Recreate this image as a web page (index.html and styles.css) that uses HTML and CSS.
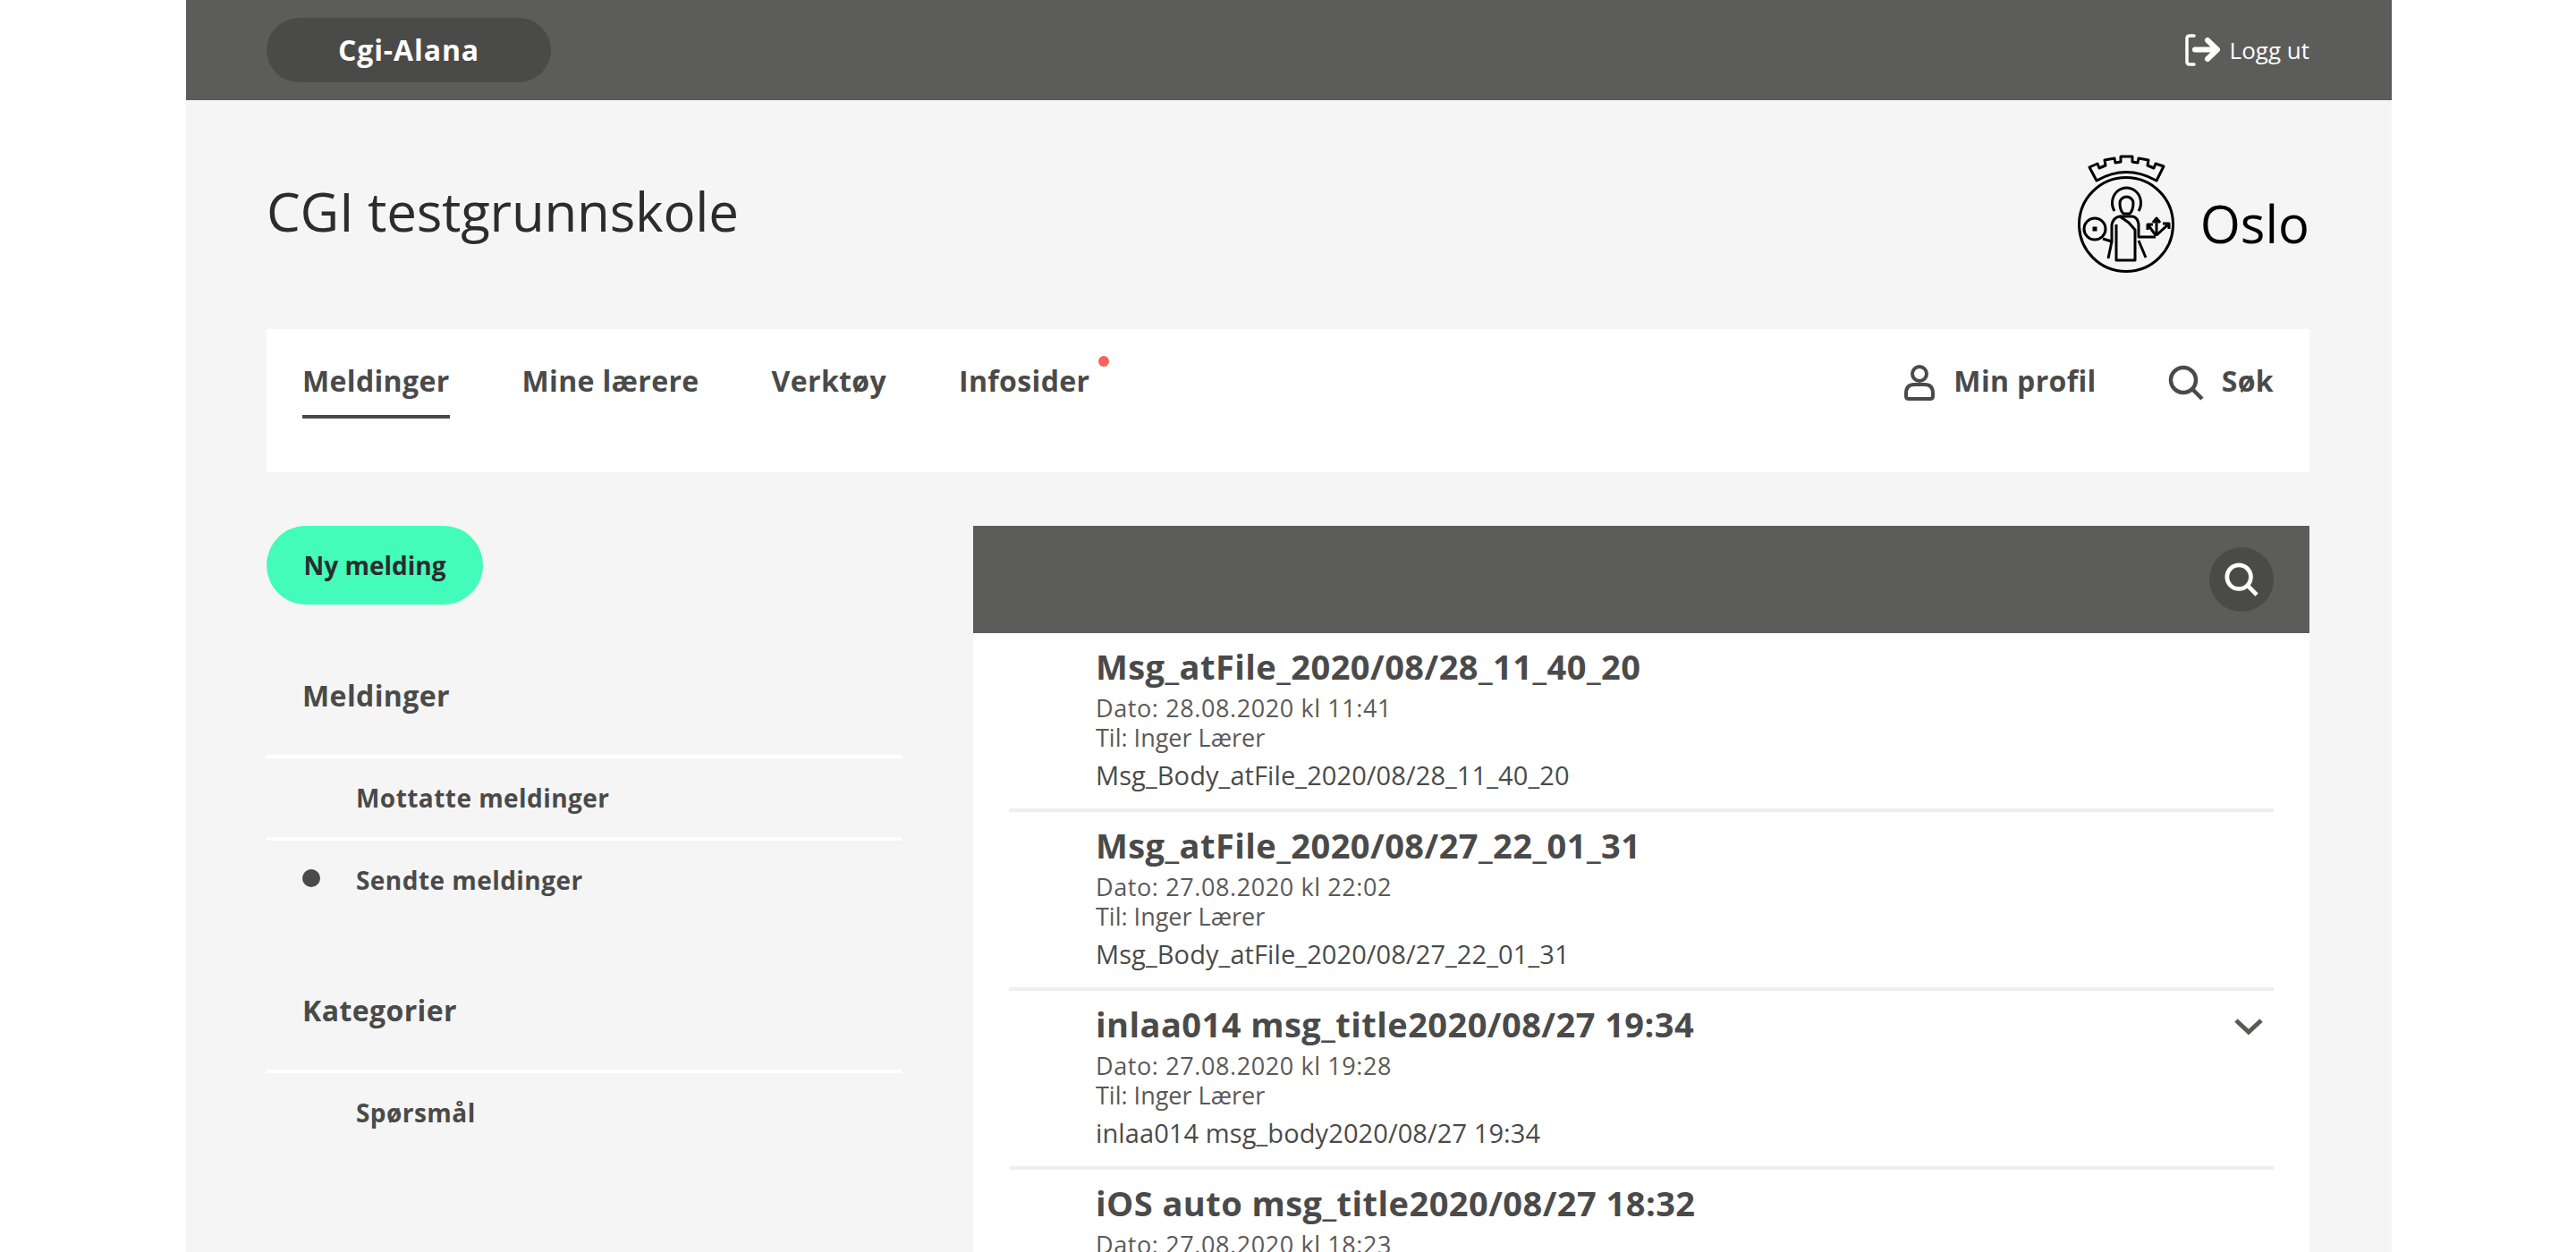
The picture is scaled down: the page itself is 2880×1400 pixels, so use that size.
FILE: index.html
```html
<!DOCTYPE html>
<html lang="no">
<head>
<meta charset="utf-8">
<title>CGI testgrunnskole</title>
<link rel="stylesheet" href="styles.css">
</head>
<body>
<div class="page">
  <header class="topbar">
    <div class="user-pill">Cgi-Alana</div>
    <a class="logout">
      <svg class="logout-icon" viewBox="0 0 40 36" fill="none" stroke="#fff" stroke-linecap="round" stroke-linejoin="round">
        <path d="M10 2H5Q2 2 2 5V31Q2 34 5 34H10" stroke-width="3.500"/>
        <path d="M11 17.500H35M25 7L36 17.500L25 28" stroke-width="6"/>
      </svg>
      <span>Logg ut</span>
    </a>
  </header>

  <div class="brand">
    <h1 class="school">CGI testgrunnskole</h1>
    <div class="logo">
      <svg class="logo-mark" viewBox="0 0 110 134" fill="none" stroke="#000" stroke-width="3" stroke-linejoin="round">
        <path d="M22 29L14 14L23 10L25 15L32 12L31 6L42 4L43 9L49 8V2H62V8L68 9L69 4L80 6L79 12L86 15L88 10L97 13L89 29Q55 10 22 29Z"/>
        <circle cx="55" cy="78" r="52.500"/>
        <path d="M42 63A16 17 0 1 1 69 63"/>
        <path d="M48 54A7.500 7 0 0 1 63 54Q63 62 59 66H52Q48 62 48 54Z"/>
        <circle cx="20" cy="83" r="12"/>
        <rect x="17.500" y="80.500" width="5" height="5" fill="#000" stroke="none"/>
        <path d="M29 94L39 97V78Q41 70 48 69L58 76L65 84V118H44V78"/>
        <path d="M48 69H62Q68 70 69 78V92H88"/>
        <path d="M39 97L35 116M69 96L77 115"/>
        <path d="M89 91V72M85 76L89 71L93 76M88 90L80 79M79 84V78H85M89 90L102 78M96 77H103V83"/>
      </svg>
      <span class="logo-text">Oslo</span>
    </div>
  </div>

  <nav class="mainnav">
    <ul class="nav-left">
      <li class="nav-item active">Meldinger</li>
      <li class="nav-item">Mine lærere</li>
      <li class="nav-item">Verktøy</li>
      <li class="nav-item has-dot">Infosider</li>
    </ul>
    <div class="nav-right">
      <span class="nav-tool">
        <svg class="nav-icon" viewBox="0 0 36 40" fill="none" stroke="#4a4a4a" stroke-width="4">
          <circle cx="18" cy="10" r="8"/>
          <path d="M3 32Q3 22 12 22H24Q33 22 33 32V35Q33 38 30 38H6Q3 38 3 35Z"/>
        </svg>
        Min profil
      </span>
      <span class="nav-tool">
        <svg class="nav-icon search" viewBox="0 0 40 40" fill="none" stroke="#4a4a4a" stroke-width="4.500">
          <circle cx="17" cy="17" r="14"/>
          <path d="M27 27L38 38"/>
        </svg>
        Søk
      </span>
    </div>
  </nav>

  <div class="content">
    <aside class="sidebar">
      <button class="new-message">Ny melding</button>
      <section class="side-group">
        <h2 class="side-title">Meldinger</h2>
        <div class="side-link">Mottatte meldinger</div>
        <div class="side-link current">Sendte meldinger</div>
      </section>
      <section class="side-group">
        <h2 class="side-title">Kategorier</h2>
        <div class="side-link">Spørsmål</div>
      </section>
    </aside>

    <main class="messages">
      <div class="toolbar">
        <span class="search-btn">
          <svg viewBox="0 0 40 40" fill="none" stroke="#fff" stroke-width="5">
            <circle cx="17" cy="17" r="14"/>
            <path d="M27 27L38 38"/>
          </svg>
        </span>
      </div>
      <article class="row">
        <h3 class="row-title">Msg_atFile_2020/08/28_11_40_20</h3>
        <p class="row-date">Dato: 28.08.2020 kl 11:41</p>
        <p class="row-to">Til: Inger Lærer</p>
        <p class="row-body">Msg_Body_atFile_2020/08/28_11_40_20</p>
      </article>
      <article class="row">
        <h3 class="row-title">Msg_atFile_2020/08/27_22_01_31</h3>
        <p class="row-date">Dato: 27.08.2020 kl 22:02</p>
        <p class="row-to">Til: Inger Lærer</p>
        <p class="row-body">Msg_Body_atFile_2020/08/27_22_01_31</p>
      </article>
      <article class="row">
        <h3 class="row-title">inlaa014 msg_title2020/08/27 19:34</h3>
        <svg class="chevron" viewBox="0 0 32 20" fill="none" stroke="#595958" stroke-width="5">
          <path d="M2 3L16 16L30 3"/>
        </svg>
        <p class="row-date">Dato: 27.08.2020 kl 19:28</p>
        <p class="row-to">Til: Inger Lærer</p>
        <p class="row-body">inlaa014 msg_body2020/08/27 19:34</p>
      </article>
      <article class="row">
        <h3 class="row-title">iOS auto msg_title2020/08/27 18:32</h3>
        <p class="row-date">Dato: 27.08.2020 kl 18:23</p>
      </article>
    </main>
  </div>
</div>
</body>
</html>
```
FILE: styles.css
```css
* { box-sizing: border-box; }
html, body { margin: 0; height: 1400px; overflow: hidden; background: #fff; }
body { font-family: "Open Sans", "Noto Sans", sans-serif; color: #4a4a4a; }
h1, h2, h3, p, ul { margin: 0; padding: 0; }
ul { list-style: none; }

.page { width: 2466px; height: 1400px; margin-left: 208px; background: #f5f5f5; overflow: hidden; }

.topbar { height: 112px; background: #5c5c5a; padding: 20px 92px 20px 90px; display: flex; justify-content: space-between; align-items: center; }
.user-pill { width: 318px; height: 72px; padding-bottom: 2px; border-radius: 36px; background: #4a4a49; color: #fff; font-size: 32px; font-weight: 700; display: flex; align-items: center; justify-content: center; letter-spacing: 0.9px; }
.logout { display: flex; align-items: center; gap: 10px; color: #fff; font-size: 26px; }
.logout-icon { width: 40px; height: 36px; }

.brand { height: 256px; padding: 61px 92px 0 90px; display: flex; justify-content: space-between; align-items: flex-start; }
.school { font-size: 60px; font-weight: 500; color: #2c2c2c; line-height: 76px; margin-top: 25px; letter-spacing: -0.2px; }
.logo { display: flex; align-items: center; gap: 28px; }
.logo-mark { width: 110px; height: 134px; }
.logo-text { font-size: 58px; color: #000; margin-top: 18px; }

.mainnav { margin: 0 92px 0 90px; height: 160px; background: #fff; padding: 0 40px; display: flex; justify-content: space-between; }
.nav-left { display: flex; gap: 81px; }
.nav-item { height: 100px; padding-top: 36px; font-size: 32px; line-height: 44px; font-weight: 700; position: relative; letter-spacing: 0.35px; }
.nav-item.active { border-bottom: 4px solid #4a4a4a; padding-top: 36px; }
.nav-item.has-dot::after { content: ""; position: absolute; top: 30px; right: -22px; width: 12px; height: 12px; border-radius: 50%; background: #f8625a; }
.nav-right { display: flex; gap: 80px; padding-top: 36px; }
.nav-tool { display: flex; align-items: flex-start; gap: 20px; font-size: 32px; line-height: 44px; font-weight: 700; letter-spacing: 0.35px; }
.nav-icon { width: 36px; height: 40px; margin-top: 4px; }
.nav-icon.search { width: 40px; }

.content { margin: 60px 92px 0 90px; display: grid; grid-template-columns: 710px 1fr; gap: 80px; }

.new-message { width: 242px; height: 88px; border: 0; border-radius: 44px; background: #43fcbc; color: #2c2c2c; font: 700 28px "Open Sans", sans-serif; display: block; padding: 0; }
.side-group { margin-top: 80px; }
.side-group + .side-group { margin-top: 76px; }
.side-title { font-size: 32px; line-height: 44px; font-weight: 700; padding: 0 40px 44px; border-bottom: 4px solid #fff; letter-spacing: 0.4px; }
.side-link { position: relative; height: 92px; padding: 24px 0 0 100px; font-size: 28px; line-height: 40px; font-weight: 700; border-bottom: 4px solid #fff; letter-spacing: 0.45px; }
.side-link:last-child { border-bottom: 0; }
.side-link.current::before { content: ""; position: absolute; left: 40px; top: 32px; width: 20px; height: 20px; border-radius: 50%; background: #4a4a4a; }

.messages { background: #fff; height: 812px; }
.toolbar { height: 120px; background: #5c5c5a; padding: 24px 40px; display: flex; justify-content: flex-end; }
.search-btn { width: 72px; height: 72px; border-radius: 50%; background: #4a4a49; display: flex; align-items: center; justify-content: center; }
.search-btn svg { width: 38px; height: 38px; }

.row { position: relative; height: 200px; margin: 0 40px; padding: 12px 0 0 97px; border-bottom: 4px solid #eee; }
.row-title { font-size: 38px; line-height: 50px; font-weight: 700; letter-spacing: 0.45px; margin-bottom: 6px; }
.row-date { font-size: 27px; line-height: 32px; color: #595958; letter-spacing: 0.6px; }
.row-to { font-size: 27px; line-height: 32px; color: #595958; margin-top: 1px; }
.row-body { font-size: 29px; line-height: 36px; margin-top: 8px; color: #4a4a4a; letter-spacing: 0.1px; }
.chevron { position: absolute; right: 12px; top: 30px; width: 32px; height: 20px; }
```
